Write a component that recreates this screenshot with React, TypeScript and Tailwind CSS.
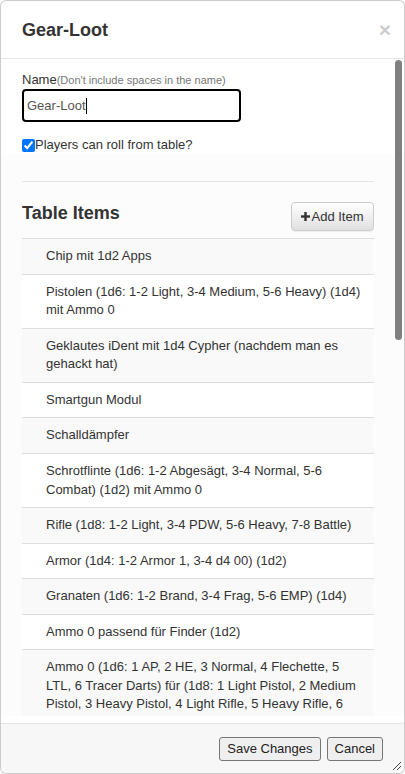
import React from "react";

const items: string[] = [
  "Chip mit 1d2 Apps",
  "Pistolen (1d6: 1-2 Light, 3-4 Medium, 5-6 Heavy) (1d4) mit Ammo 0",
  "Geklautes iDent mit 1d4 Cypher (nachdem man es gehackt hat)",
  "Smartgun Modul",
  "Schalldämpfer",
  "Schrotflinte (1d6: 1-2 Abgesägt, 3-4 Normal, 5-6 Combat) (1d2) mit Ammo 0",
  "Rifle (1d8: 1-2 Light, 3-4 PDW, 5-6 Heavy, 7-8 Battle)",
  "Armor (1d4: 1-2 Armor 1, 3-4 d4 00) (1d2)",
  "Granaten (1d6: 1-2 Brand, 3-4 Frag, 5-6 EMP) (1d4)",
  "Ammo 0 passend für Finder (1d2)",
  "Ammo 0 (1d6: 1 AP, 2 HE, 3 Normal, 4 Flechette, 5 LTL, 6 Tracer Darts) für (1d8: 1 Light Pistol, 2 Medium Pistol, 3 Heavy Pistol, 4 Light Rifle, 5 Heavy Rifle, 6 Shotgun, 7 PDW, 8 Battle Rifle)",
  "Medkit (1d2)",
  "Stim-Pack (1d4)",
  "Credstick mit 1d6 x 100 Credits",
  "Cyberdeck (1d6: 1-2 Alt, 3-4 Standard, 5-6 Neu)",
  "Messer (1d6: 1-3 Kampfmesser, 4-6 Monofilament)",
  "Kommlink mit 1d4 Kontakten",
  "Granaten (1d2) mit Zünder",
  "Drohne (1d6: 1-3 Mini, 4-6 Standard)",
  "Nachtsichtbrille",
  "Ausweis (gefälscht)",
  "Werkzeugkasten",
  "Datenchip mit 1d4 Dateien",
  "Taschenlampe",
  "Seil (20m)",
];

function PlusIcon() {
  return (
    <svg width="9" height="9" viewBox="0 0 9 9" className="mr-[1px]">
      <rect x="3.3" y="0" width="2.4" height="9" fill="#333" />
      <rect x="0" y="3.3" width="9" height="2.4" fill="#333" />
    </svg>
  );
}

export default function App() {
  return (
    <div
      className="relative w-[405px] h-[774px] bg-white flex flex-col border border-black/20 rounded-[6px] overflow-hidden text-[#333]"
      style={{ fontFamily: '"Liberation Sans", Arial, sans-serif' }}
    >
      {/* Header */}
      <div className="h-[58px] shrink-0 border-b border-[#e5e5e5] flex items-center justify-between pl-[21px] pr-[13px] pt-[1px]">
        <h4 className="text-[18px] font-bold leading-[26px] m-0">Gear-Loot</h4>
        <button className="text-[21px] font-bold leading-none text-black opacity-20 -mt-[2px]">×</button>
      </div>

      {/* Body */}
      <div className="flex-1 min-h-0 overflow-y-auto mb-[7px] [scrollbar-width:none] [&::-webkit-scrollbar]:hidden">
        <div className="pl-[21px] pr-[30px] pt-[12px]">
          <label className="block text-[13px] leading-[18px]">
            Name<span className="text-[11px] text-[#777]">(Don't include spaces in the name)</span>
          </label>
          <div className="w-[219px] h-[33px] border-2 border-black rounded-[4px] flex items-center pl-[3px] text-[13px] text-[#555]">
            <span>Gear-Loot</span>
            <span className="inline-block w-[1px] h-[16px] bg-black" />
          </div>
          <label className="mt-[14px] flex items-center text-[13px] leading-[18px]">
            <input type="checkbox" defaultChecked className="w-[13px] h-[13px] m-0 accent-[#0075ff]" />
            <span>Players can roll from table?</span>
          </label>
        </div>

        <div className="pl-[21px] pr-[30px] pt-[27px] bg-[#fcfcfc]">
          <div className="border-t border-[#e5e5e5]" />
          <div className="mt-[20px] flex items-start justify-between h-[30px]">
            <h3 className="text-[18px] font-bold leading-[26px] m-0 -mt-[2px]">Table Items</h3>
            <button className="h-[29px] w-[83px] flex items-center justify-center text-[13px] text-[#333] border border-[#ccc] rounded-[4px] bg-gradient-to-b from-white to-[#e0e0e0] shadow-[0_1px_0_rgba(0,0,0,0.05)]">
              <PlusIcon />
              Add Item
            </button>
          </div>
          <div className="mt-[6px]">
            {items.map((t, i) => (
              <div
                key={i}
                className={`border-t border-[#ddd] py-[8px] pl-[24px] pr-[10px] text-[13px] leading-[1.42857] ${i % 2 === 0 ? "bg-[#f9f9f9]" : "bg-white"}`}
              >
                {t}
              </div>
            ))}
          </div>
          <div className="h-[20px]" />
        </div>
      </div>

      {/* scrollbar thumb */}
      <div className="absolute top-[59px] right-[2px] w-[7px] h-[280px] rounded-full bg-[#808080]" />

      {/* Footer */}
      <div className="h-[50px] shrink-0 border-t border-[#e5e5e5] bg-[#f7f7f7] flex items-center justify-end pr-[21px] gap-[6px] pt-[1px]">
        <button className="h-[24px] px-[7px] border border-[#767676] rounded-[3px] bg-[#efefef] text-[13px] text-[#222]">
          Save Changes
        </button>
        <button className="h-[24px] px-[7px] border border-[#767676] rounded-[3px] bg-[#efefef] text-[13px] text-[#222]">
          Cancel
        </button>
      </div>

      {/* resize grip */}
      <svg className="absolute right-[2px] bottom-[2px]" width="10" height="10" viewBox="0 0 10 10">
        <line x1="1" y1="9" x2="9" y2="1" stroke="#444" strokeWidth="1" />
        <line x1="5" y1="9" x2="9" y2="5" stroke="#444" strokeWidth="1" />
      </svg>
    </div>
  );
}
